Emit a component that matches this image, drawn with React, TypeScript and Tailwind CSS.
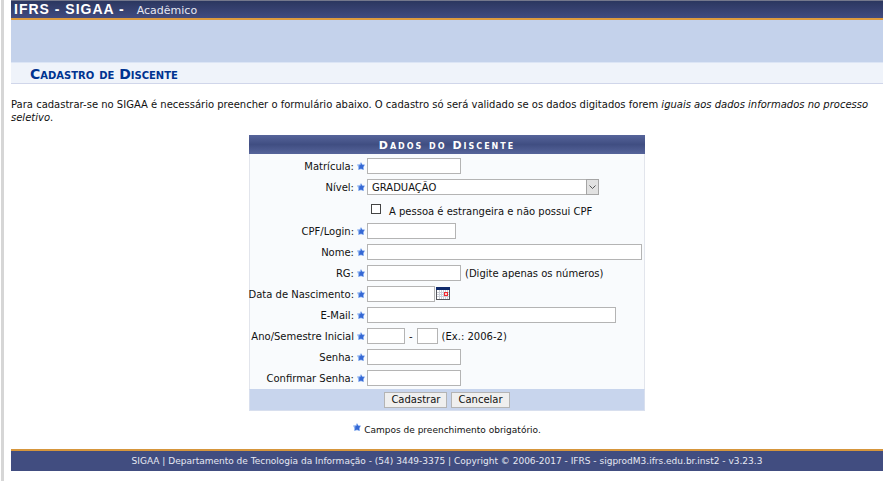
import type { ReactNode } from "react";

const box =
  "h-4 border border-[#b4b4b4] bg-white px-1 text-[10px] text-[#111] outline-none focus:border-[#4a6fc0]";

function Star() {
  return (
    <svg viewBox="0 0 8 8" className="size-2 shrink-0" aria-hidden="true">
      <path d="M4 0 5.4 2.2 8 2.6 6.8 5 6.9 8 4 7.2 1.1 8 1.2 5 0 2.6 2.6 2.2Z" fill="#8db1f0" />
      <path d="M4.2 1.2 5.2 3 7.4 3.3 6 5 6.2 7.4 4 6.6 2 7.3 2.3 4.6 2.2 3.3 3.6 3Z" fill="#3568d4" />
    </svg>
  );
}

function CalendarIcon() {
  return (
    <svg viewBox="0 0 14 13" className="h-[13px] w-[14px]" shapeRendering="crispEdges" aria-hidden="true">
      <rect width="14" height="13" fill="#55565c" />
      <rect x="1" y="3" width="12" height="9" fill="#fff" />
      <rect width="14" height="3" fill="#0f2a6b" />
      <path d="M3.5 3v9M5.5 3v9M7.5 3v9M9.5 3v9M11.5 3v9M1 5.5h12M1 7.5h12M1 9.5h12" stroke="#ccd0d8" />
      <rect x="8" y="5" width="4" height="4" fill="#f0282d" />
      <rect x="9" y="6" width="2" height="2" fill="#fbd0d0" />
    </svg>
  );
}

function Row({ id, label, children }: { id: string; label: string; children: ReactNode }) {
  return (
    <div className="flex h-[21px] items-center">
      <label
        htmlFor={id}
        className="flex w-[117px] shrink-0 items-center justify-end gap-[3px] pr-0.5 whitespace-nowrap"
      >
        <span className="pt-0.5">{label}</span>
        <Star />
      </label>
      {children}
    </div>
  );
}

export default function App() {
  return (
    <div className="ml-px min-h-screen border-l-3 border-[#d6d6d6] bg-white pr-0.5 pl-[7px] font-['DejaVu_Sans',Verdana,sans-serif] text-[10px] leading-[13px] text-[#111]">
      <header>
        <div className="flex h-5 items-center gap-3 border-t border-b-2 border-t-[#74788c] border-b-[#dc9a3e] bg-linear-to-b from-[#2b3760] to-[#414b80] pl-[3px] text-white">
          <strong className="font-['Liberation_Sans',Arial,sans-serif] text-[14px] tracking-[1px]">IFRS - SIGAA -</strong>
          <span className="pt-0.5 text-[11px] text-[#e6e8f2]">Acadêmico</span>
        </div>
        <div className="h-[42px] bg-[#c4d2eb]" />
        <h1 className="flex h-[22px] items-center border-y border-t-[#dce5f5] border-b-[#d0d6ea] bg-[#eff3fa] pt-0.5 pl-[19px] text-[14px] font-bold text-[#003390] [font-variant:small-caps]">
          Cadastro de Discente
        </h1>
      </header>

      <main>
        <p className="mt-3.5">
          Para cadastrar-se no SIGAA é necessário preencher o formulário abaixo. O cadastro só será validado se os dados
          digitados forem <em>iguais aos dados informados no processo seletivo</em>.
        </p>

        <form className="mx-auto mt-[11px] w-[396px]" onSubmit={(e) => e.preventDefault()}>
          <h2 className="flex h-[19px] items-center justify-center bg-linear-to-b from-[#56649a] via-[#404e82] to-[#56649a] pt-px text-[11px] font-bold tracking-[2px] text-white [font-variant:small-caps]">
            Dados do Discente
          </h2>
          <div className="border-x border-[#e2e5ec] bg-[#f9fbfd] py-px">
            <Row id="matricula" label="Matrícula:">
              <input id="matricula" className={`${box} w-[94px]`} />
            </Row>
            <Row id="nivel" label="Nível:">
              <div className="relative flex">
                <select id="nivel" className={`${box} w-[232px] appearance-none pt-px leading-[13px]`}>
                  <option>GRADUAÇÃO</option>
                </select>
                <span className="pointer-events-none absolute inset-y-0 right-0 flex w-[13px] items-center justify-center border border-[#a5a5a5] bg-[#e1e1e1]">
                  <svg viewBox="0 0 7 4" className="h-1 w-[7px]" aria-hidden="true">
                    <path d="M.5.5 3.5 3.5 6.5.5" fill="none" stroke="#555" />
                  </svg>
                </span>
              </div>
            </Row>
            <div className="flex h-[23px] items-center gap-2 pt-1 pl-[121px]">
              <input
                id="estrangeira"
                type="checkbox"
                className="mb-1 size-2.5 appearance-none border border-[#444] bg-white checked:bg-[#2c5fd0]"
              />
              <label htmlFor="estrangeira" className="pt-px">
                A pessoa é estrangeira e não possui CPF
              </label>
            </div>
            <Row id="cpf" label="CPF/Login:">
              <input id="cpf" className={`${box} w-[89px]`} />
            </Row>
            <Row id="nome" label="Nome:">
              <input id="nome" className={`${box} w-[275px]`} />
            </Row>
            <Row id="rg" label="RG:">
              <input id="rg" className={`${box} w-[94px]`} />
              <span className="ml-1 pt-0.5">(Digite apenas os números)</span>
            </Row>
            <Row id="nascimento" label="Data de Nascimento:">
              <input id="nascimento" className={`${box} w-[68px]`} />
              <button type="button" className="ml-px" aria-label="Calendário">
                <CalendarIcon />
              </button>
            </Row>
            <Row id="email" label="E-Mail:">
              <input id="email" type="email" className={`${box} w-[249px]`} />
            </Row>
            <Row id="ano" label="Ano/Semestre Inicial">
              <input id="ano" className={`${box} w-[38px]`} />
              <span className="mx-1 pt-0.5">-</span>
              <input aria-label="Semestre" className={`${box} w-[21px]`} />
              <span className="ml-1 pt-0.5">(Ex.: 2006-2)</span>
            </Row>
            <Row id="senha" label="Senha:">
              <input id="senha" type="password" className={`${box} w-[94px]`} />
            </Row>
            <Row id="confirmar" label="Confirmar Senha:">
              <input id="confirmar" type="password" className={`${box} w-[94px]`} />
            </Row>
          </div>
          <div className="flex h-[22px] items-center justify-center gap-1 border border-[#d8dfee] border-t-[#c8d5ed] bg-[#c8d5ed]">
            <button type="submit" className="h-4 border border-[#b4b4b4] bg-[#efefef] px-1.5 leading-[14px]">
              Cadastrar
            </button>
            <button type="button" className="h-4 border border-[#b4b4b4] bg-[#efefef] px-1.5 leading-[14px]">
              Cancelar
            </button>
          </div>
        </form>

        <p className="mt-3 flex justify-center gap-[3px] text-[9px]">
          <Star />
          <span className="pt-px">Campos de preenchimento obrigatório.</span>
        </p>
      </main>

      <footer className="mt-3 flex h-[22px] items-center justify-center border-t-2 border-[#d6963c] bg-[#414d80] text-[9px] text-[#e6e8f2]">
        SIGAA | Departamento de Tecnologia da Informação - (54) 3449-3375 | Copyright © 2006-2017 - IFRS -
        sigprodM3.ifrs.edu.br.inst2 - v3.23.3
      </footer>
    </div>
  );
}
